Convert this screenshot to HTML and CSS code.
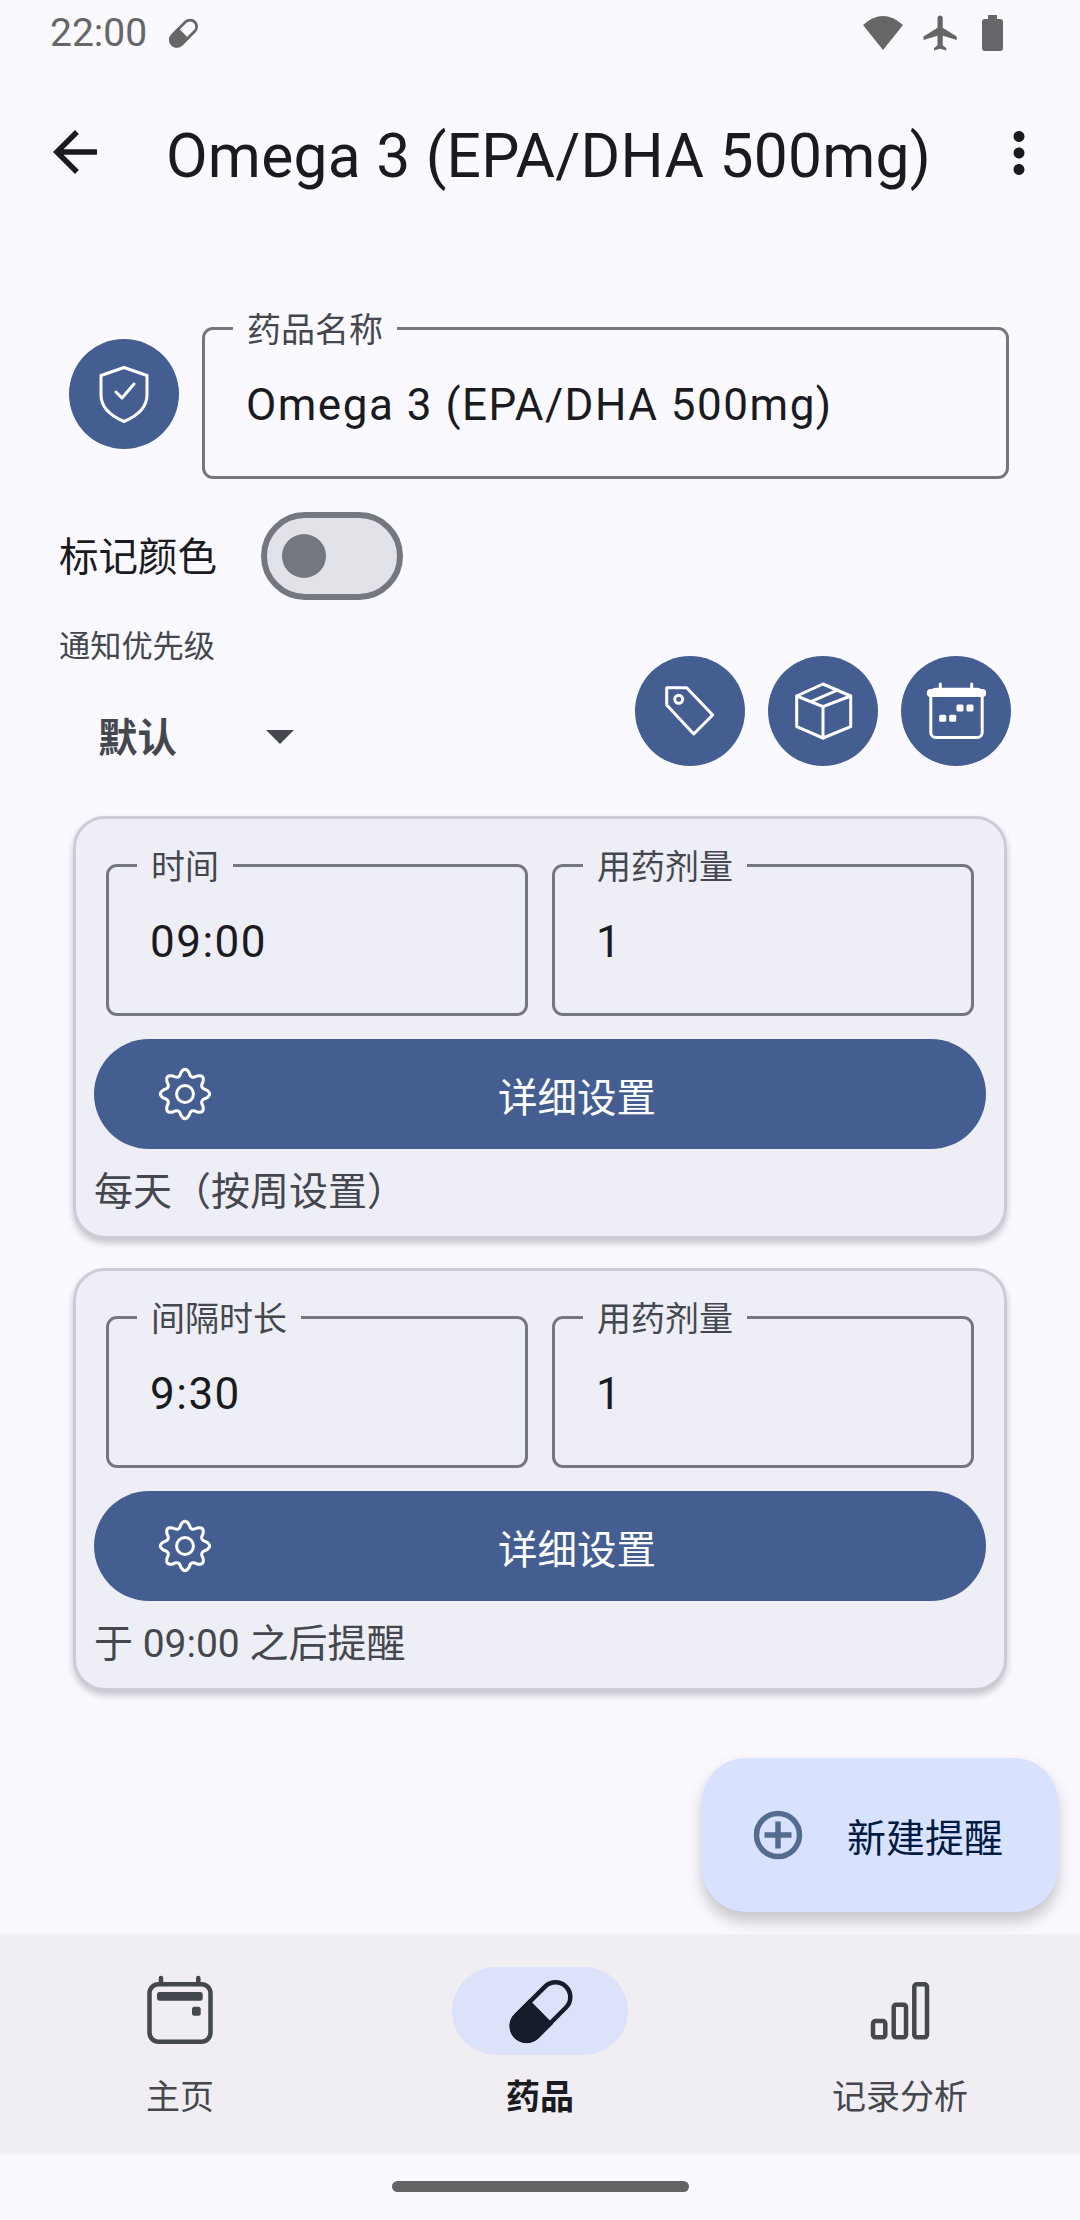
FILE: index.html
```html
<!DOCTYPE html>
<html lang="zh-CN">
<head>
    <meta charset="utf-8">
    <title>Omega 3 (EPA/DHA 500mg)</title>
    <link rel="stylesheet" href="styles.css">
</head>
<body>
<div class="app">
    <!-- status bar -->
    <div class="status">
        <span class="clock">22:00</span>
        <svg class="status-pill" viewBox="0 0 88 88">
            <g transform="rotate(45 45 44.5)">
                <rect x="30.5" y="9.5" width="29" height="70" rx="14.5" fill="none" stroke="#666" stroke-width="6"/>
                <path d="M28.2 44.5H62.2V65A17 17 0 0 1 28.2 65Z" fill="#666"/>
            </g>
        </svg>
        <div class="status-right">
            <svg class="wifi" viewBox="0 0 40 36"><path d="M0 10Q20 -8 40 10L20 35Z" fill="#666"/></svg>
            <svg class="plane" viewBox="0 0 24 24"><path d="M21 16v-2l-8-5V3.5c0-.83-.67-1.5-1.5-1.5S10 2.67 10 3.5V9l-8 5v2l8-2.5V19l-2 1.5V22l3.5-1 3.5 1v-1.5L13 19v-5.5l8 2.5z" fill="#666"/></svg>
            <svg class="battery" viewBox="0 0 21 36"><path d="M6 0H15V4H18A3 3 0 0 1 21 7V33A3 3 0 0 1 18 36H3A3 3 0 0 1 0 33V7A3 3 0 0 1 3 4H6Z" fill="#666"/></svg>
        </div>
    </div>

    <!-- top bar -->
    <div class="topbar">
        <svg class="bar-icon" viewBox="0 0 24 24"><path d="M20 11H7.83l5.59-5.59L12 4l-8 8 8 8 1.41-1.41L7.83 13H20v-2z"/></svg>
        <h1 class="title">Omega 3 (EPA/DHA 500mg)</h1>
        <svg class="bar-icon bar-more" viewBox="0 0 24 24"><path d="M12 8c1.1 0 2-.9 2-2s-.9-2-2-2-2 .9-2 2 .9 2 2 2zm0 2c-1.1 0-2 .9-2 2s.9 2 2 2 2-.9 2-2-.9-2-2-2zm0 6c-1.1 0-2 .9-2 2s.9 2 2 2 2-.9 2-2-.9-2-2-2z"/></svg>
    </div>

    <div class="content">
        <div class="name-row">
            <div class="round-btn name-btn">
                <svg viewBox="0 0 110 110" class="line-icon">
                    <path d="M55 28.500L78 36.500V56C78 68 68 77 55 82.500C42 77 32 68 32 56V36.500Z"/>
                    <path d="M47 53L53 59L65 45"/>
                </svg>
            </div>
            <div class="field field-name">
                <span class="field-label">药品名称</span>
                <span class="field-value">Omega 3 (EPA/DHA 500mg)</span>
            </div>
        </div>

        <div class="color-row">
            <span class="color-label">标记颜色</span>
            <div class="switch"><span class="switch-thumb"></span></div>
        </div>

        <div class="priority-row">
            <div class="priority">
                <div class="priority-label">通知优先级</div>
                <div class="priority-select">
                    <span>默认</span>
                    <span class="caret"></span>
                </div>
            </div>
            <div class="round-btns">
                <div class="round-btn">
                    <svg viewBox="0 0 110 110" class="line-icon">
                        <path d="M31.700 31.700H51.700L77.700 59L58.700 78L31.700 49Z"/>
                        <circle cx="43.700" cy="43.300" r="4"/>
                    </svg>
                </div>
                <div class="round-btn">
                    <svg viewBox="0 0 110 110" class="line-icon">
                        <path d="M55 28L82.700 40V70.700L55 82L28.700 70.700V40Z"/>
                        <path d="M28.700 40L55 50.700L82.700 40M55 50.700V82M43 45.700L69.700 34"/>
                    </svg>
                </div>
                <div class="round-btn">
                    <svg viewBox="0 0 110 110" class="line-icon">
                        <rect x="29.800" y="33.200" width="51.400" height="48.300" rx="5"/>
                        <path d="M29.800 37H81.200" stroke-width="8"/>
                        <path d="M39.300 28V33M70.700 28V33"/>
                        <g class="dots">
                            <rect x="55.500" y="48.500" width="7" height="7" rx="1.500"/>
                            <rect x="65.500" y="48.500" width="7" height="7" rx="1.500"/>
                            <rect x="38.200" y="58.800" width="7" height="7" rx="1.500"/>
                            <rect x="48.200" y="58.800" width="7" height="7" rx="1.500"/>
                        </g>
                    </svg>
                </div>
            </div>
        </div>

        <div class="card">
            <div class="card-fields">
                <div class="field">
                    <span class="field-label">时间</span>
                    <span class="field-value">09:00</span>
                </div>
                <div class="field">
                    <span class="field-label">用药剂量</span>
                    <span class="field-value">1</span>
                </div>
            </div>
            <div class="detail-btn">
                <svg class="gear" viewBox="-32 -32 64 64">
                    <path d="M-4.490-22.560Q0-30 4.490-22.560Q6.310-15.240 12.780-19.120Q21.200-21.200 19.120-12.780Q15.240-6.310 22.560-4.490Q30 0 22.560 4.490Q15.240 6.310 19.120 12.780Q21.200 21.200 12.780 19.120Q6.310 15.240 4.490 22.560Q0 30-4.490 22.560Q-6.310 15.240-12.780 19.120Q-21.200 21.200-19.120 12.780Q-15.240 6.310-22.560 4.490Q-30 0-22.560-4.490Q-15.240-6.310-19.120-12.780Q-21.200-21.200-12.780-19.120Q-6.310-15.240-4.490-22.560Z"/>
                    <circle r="9"/>
                </svg>
                <span class="detail-text">详细设置</span>
            </div>
            <div class="card-note">每天（按周设置）</div>
        </div>

        <div class="card">
            <div class="card-fields">
                <div class="field">
                    <span class="field-label">间隔时长</span>
                    <span class="field-value">9:30</span>
                </div>
                <div class="field">
                    <span class="field-label">用药剂量</span>
                    <span class="field-value">1</span>
                </div>
            </div>
            <div class="detail-btn">
                <svg class="gear" viewBox="-32 -32 64 64">
                    <path d="M-4.490-22.560Q0-30 4.490-22.560Q6.310-15.240 12.780-19.120Q21.200-21.200 19.120-12.780Q15.240-6.310 22.560-4.490Q30 0 22.560 4.490Q15.240 6.310 19.120 12.780Q21.200 21.200 12.780 19.120Q6.310 15.240 4.490 22.560Q0 30-4.490 22.560Q-6.310 15.240-12.780 19.120Q-21.200 21.200-19.120 12.780Q-15.240 6.310-22.560 4.490Q-30 0-22.560-4.490Q-15.240-6.310-19.120-12.780Q-21.200-21.200-12.780-19.120Q-6.310-15.240-4.490-22.560Z"/>
                    <circle r="9"/>
                </svg>
                <span class="detail-text">详细设置</span>
            </div>
            <div class="card-note">于 09:00 之后提醒</div>
        </div>

        <div class="fab">
            <svg class="fab-icon" viewBox="0 0 50 50">
                <circle cx="25" cy="25" r="21.500"/>
                <path d="M25 11.500V38.500M11.500 25H38.500"/>
            </svg>
            <span>新建提醒</span>
        </div>
    </div>

    <!-- bottom nav -->
    <div class="nav">
        <div class="tab">
            <div class="tab-pill">
                <svg viewBox="0 0 88 88">
                    <rect class="nav-line" x="13.500" y="17.200" width="61" height="57.600" rx="9"/>
                    <path class="nav-line" d="M25 11V17M62.300 11V17"/>
                    <rect class="nav-fill" x="21" y="25" width="45.700" height="8.700" rx="2.500"/>
                    <rect class="nav-fill" x="56" y="39.700" width="8.700" height="9" rx="2.500"/>
                </svg>
            </div>
            <span class="tab-label">主页</span>
        </div>
        <div class="tab tab-active">
            <div class="tab-pill">
                <svg viewBox="0 0 88 88">
                    <g transform="rotate(45 45 44.500)">
                        <rect x="30.200" y="9.200" width="29.600" height="70.600" rx="14.800" fill="none" stroke="#161C2C" stroke-width="4.500"/>
                        <path d="M28.200 44.500H62.200V65A17 17 0 0 1 28.200 65Z" fill="#161C2C"/>
                    </g>
                </svg>
            </div>
            <span class="tab-label">药品</span>
        </div>
        <div class="tab">
            <div class="tab-pill">
                <svg viewBox="0 0 88 88">
                    <rect class="nav-line" x="17" y="54" width="12.300" height="16.300" rx="2.500"/>
                    <rect class="nav-line" x="37.700" y="37.700" width="12.300" height="32.600" rx="2.500"/>
                    <rect class="nav-line" x="58.300" y="17.300" width="12.700" height="53" rx="2.500"/>
                </svg>
            </div>
            <span class="tab-label">记录分析</span>
        </div>
    </div>

    <div class="gesture"><span class="gesture-bar"></span></div>
</div>
</body>
</html>
```

FILE: styles.css
```css
* {
    box-sizing: border-box;
}

html, body {
    margin: 0;
    padding: 0;
}

body {
    background-color: #FAF9FF;
    font-family: Roboto, "Noto Sans CJK SC", sans-serif;
    color: #1A1B20;
}

.app {
    width: 1080px;
    height: 2220px;
    display: flex;
    flex-direction: column;
    overflow: hidden;
}

/* status bar */
.status {
    height: 66px;
    flex: none;
    display: flex;
    align-items: center;
    padding: 0 77px 0 50px;
}

.clock {
    font-size: 39px;
    color: #666666;
}

.status-pill {
    width: 40px;
    height: 40px;
    margin-left: 16px;
}

.status-right {
    margin-left: auto;
    display: flex;
    align-items: center;
}

.wifi {
    width: 40px;
    height: 36px;
}

.plane {
    width: 42px;
    height: 42px;
    margin-left: 17px;
}

.battery {
    width: 21px;
    height: 36px;
    margin-left: 20px;
}

/* top bar */
.topbar {
    height: 172px;
    flex: none;
    display: flex;
    align-items: center;
    padding: 0 28px 0 42px;
}

.bar-icon {
    width: 66px;
    height: 66px;
    flex: none;
    fill: #1A1B20;
}

.bar-more {
    margin-top: 2px;
}

.title {
    flex: 1;
    margin: 9px 0 0 58px;
    font-size: 60.5px;
    font-weight: 400;
    letter-spacing: 0.25px;
    white-space: nowrap;
}

/* form */
.content {
    flex: 1;
    position: relative;
}

.name-row {
    display: flex;
    align-items: flex-start;
    padding-left: 69px;
    margin-top: 89px;
    gap: 23px;
}

.round-btn {
    width: 110px;
    height: 110px;
    flex: none;
    border-radius: 50%;
    background-color: #455E91;
}

.name-btn {
    margin-top: 12px;
}

.line-icon {
    display: block;
    width: 110px;
    height: 110px;
    fill: none;
    stroke: #FFFFFF;
    stroke-width: 3;
    stroke-linejoin: round;
    stroke-linecap: round;
}

.line-icon .dots {
    fill: #FFFFFF;
    stroke: none;
}

.field {
    position: relative;
    height: 152px;
    border: 3px solid #74777F;
    border-radius: 11px;
    display: flex;
    align-items: center;
    padding: 3px 0 0 41px;
}

.field-name {
    width: 807px;
}

.field-label {
    position: absolute;
    left: 28px;
    top: -22px;
    padding: 0 14px;
    font-size: 34px;
    line-height: 44px;
    color: #44474E;
    background-color: #FAF9FF;
}

.field-value {
    font-size: 44px;
    letter-spacing: 1.5px;
    color: #1A1B20;
}

.color-row {
    display: flex;
    align-items: center;
    padding-left: 59px;
    margin-top: 33px;
    gap: 44px;
}

.color-label {
    margin-top: 4px;
    font-size: 39.5px;
    line-height: 50px;
}

.switch {
    width: 142px;
    height: 88px;
    border: 6px solid #74777F;
    border-radius: 44px;
    background-color: #E2E2E9;
    display: flex;
    align-items: center;
    padding-left: 15px;
}

.switch-thumb {
    width: 44px;
    height: 44px;
    border-radius: 50%;
    background-color: #74777F;
}

.priority-row {
    display: flex;
    justify-content: space-between;
    padding: 0 69px 0 59px;
    margin-top: 30px;
    height: 186px;
}

.priority-label {
    font-size: 31.2px;
    line-height: 34px;
    color: #44474E;
}

.priority-select {
    display: flex;
    align-items: center;
    height: 141px;
    padding-left: 39px;
    font-size: 39.5px;
    font-weight: 700;
    color: #44474E;
}

.caret {
    width: 0;
    height: 0;
    margin: 5px 0 0 89px;
    border-left: 14px solid transparent;
    border-right: 14px solid transparent;
    border-top: 14px solid #44474E;
}

.round-btns {
    display: flex;
    gap: 23px;
    margin-top: 26px;
}

/* reminder cards */
.card {
    width: 934px;
    height: 423px;
    margin: 0 0 29px 73px;
    padding: 45px 18px 0;
    border: 3px solid #CFCBD6;
    border-radius: 32px;
    background-color: #EEEEF6;
    box-shadow: 0 4px 7px rgba(0, 0, 0, 0.22);
}

.card-fields {
    display: flex;
    gap: 24px;
    padding: 0 12px;
}

.card-fields .field {
    flex: 1;
}

.card .field-label {
    background-color: #EEEEF6;
}

.detail-btn {
    height: 110px;
    margin-top: 23px;
    border-radius: 55px;
    background-color: #455E91;
    display: flex;
    align-items: center;
    padding-left: 61px;
    color: #FFFFFF;
}

.gear {
    width: 60px;
    height: 60px;
    flex: none;
    fill: none;
    stroke: #FFFFFF;
    stroke-width: 3.2;
}

.detail-text {
    margin-left: 283px;
    font-size: 39.5px;
}

.card-note {
    margin-top: 18px;
    font-size: 39px;
    line-height: 50px;
    color: #44474E;
}

/* floating button */
.fab {
    position: absolute;
    right: 22px;
    bottom: 22px;
    height: 154px;
    display: flex;
    align-items: center;
    padding: 0 55px 0 51px;
    gap: 44px;
    border-radius: 44px;
    background-color: #D8E2FF;
    color: #001A41;
    font-size: 39px;
    box-shadow: 0 9px 16px rgba(0, 0, 0, 0.22);
}

.fab-icon {
    width: 50px;
    height: 50px;
    fill: none;
    stroke: #556C91;
    stroke-width: 5.5;
}

/* bottom nav */
.nav {
    height: 220px;
    flex: none;
    position: relative;
    display: flex;
    padding-top: 33px;
    background-color: #F0EEF3;
}

.tab {
    flex: 1;
    display: flex;
    flex-direction: column;
    align-items: center;
    color: #44474E;
}

.tab-pill {
    width: 176px;
    height: 88px;
    border-radius: 44px;
    display: flex;
    justify-content: center;
}

.tab-pill svg {
    width: 88px;
    height: 88px;
}

.tab-active .tab-pill {
    background-color: #DCE2F9;
}

.tab-label {
    margin-top: 22px;
    font-size: 34px;
    line-height: 40px;
}

.tab-active .tab-label {
    font-weight: 700;
    color: #1A1B20;
}

.nav-line {
    fill: none;
    stroke: #44474E;
    stroke-width: 4.5;
    stroke-linecap: round;
}

.nav-fill {
    fill: #44474E;
}

.gesture {
    height: 66px;
    flex: none;
    display: flex;
    justify-content: center;
    padding-top: 27px;
}

.gesture-bar {
    width: 297px;
    height: 11px;
    border-radius: 6px;
    background-color: #646464;
}
```
